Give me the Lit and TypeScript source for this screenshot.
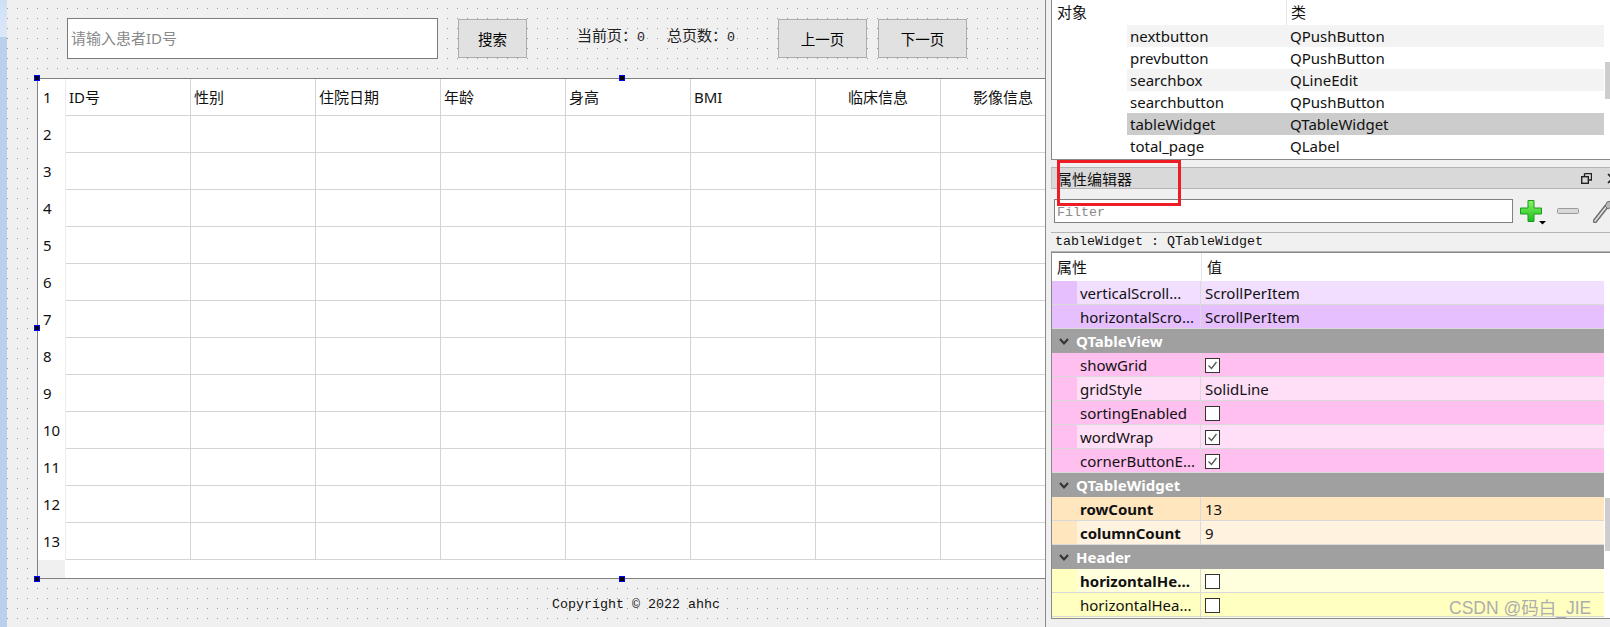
import { LitElement, html, css } from 'lit';
import { customElement } from 'lit/decorators.js';
import { classMap } from 'lit/directives/class-map.js';

interface PropRow {
  name: string;
  value?: string;
  check?: boolean;
  tone: string;
  light?: boolean;
  bold?: boolean;
  group?: boolean;
}

const HEADERS = ['ID号', '性别', '住院日期', '年龄', '身高', 'BMI', '临床信息', '影像信息', ''];
const ROW_COUNT = 13;

const OBJECTS = [
  ['nextbutton', 'QPushButton'],
  ['prevbutton', 'QPushButton'],
  ['searchbox', 'QLineEdit'],
  ['searchbutton', 'QPushButton'],
  ['tableWidget', 'QTableWidget'],
  ['total_page', 'QLabel'],
];

const PROPS: PropRow[] = [
  { name: 'verticalScroll...', value: 'ScrollPerItem', tone: 'purple', light: true },
  { name: 'horizontalScro...', value: 'ScrollPerItem', tone: 'purple' },
  { name: 'QTableView', tone: 'grey', group: true },
  { name: 'showGrid', check: true, tone: 'pink' },
  { name: 'gridStyle', value: 'SolidLine', tone: 'pink', light: true },
  { name: 'sortingEnabled', check: false, tone: 'pink' },
  { name: 'wordWrap', check: true, tone: 'pink', light: true },
  { name: 'cornerButtonE...', check: true, tone: 'pink' },
  { name: 'QTableWidget', tone: 'grey', group: true },
  { name: 'rowCount', value: '13', tone: 'orange', bold: true },
  { name: 'columnCount', value: '9', tone: 'orange', light: true, bold: true },
  { name: 'Header', tone: 'grey', group: true },
  { name: 'horizontalHe...', check: false, tone: 'yellow', light: true, bold: true },
  { name: 'horizontalHea...', check: false, tone: 'yellow' },
];

@customElement('app-root')
export class AppRoot extends LitElement {
  static styles = css`
    :host {
      display: block;
      width: 1610px;
      height: 627px;
      overflow: hidden;
      background: #f0f0f0;
      font-family: 'Noto Sans', 'Noto Sans CJK SC', sans-serif;
      font-size: 15px;
      color: #111;
    }
    .page {
      position: relative;
      display: flex;
      height: 627px;
    }

    /* left strip */
    .strip {
      width: 7px;
      flex: none;
      background: linear-gradient(#cfe0f4 0, #dbe8f8 37px, #b9d1ec 37px);
    }

    /* designer form */
    .form {
      width: 1038px;
      flex: none;
      box-sizing: content-box;
      border-right: 1px solid #8a8a8a;
      background-color: #f0f0f0;
      background-image: radial-gradient(circle at 0.5px 0.5px, #999 0.7px, transparent 0.7px);
      background-size: 10px 10px;
      background-position: 0 8px;
    }
    .toolbar {
      display: flex;
      align-items: flex-start;
      height: 78px;
      padding-left: 60px;
      box-sizing: border-box;
    }
    .search {
      width: 371px;
      height: 41px;
      margin-top: 18px;
      box-sizing: border-box;
      border: 1px solid #7a7a7a;
      background: #fff;
      color: #8a8a8a;
      font-size: 15px;
      line-height: 39px;
      padding-left: 3px;
    }
    .btn {
      height: 39px;
      margin-top: 19px;
      box-sizing: border-box;
      border: 1px solid #adadad;
      background: #e1e1e1;
      display: flex;
      align-items: center;
      justify-content: center;
      font-size: 14.5px;
      color: #000;
    }
    .btn.search-btn {
      width: 69px;
      margin-left: 20px;
    }
    .btn.page-btn {
      width: 89px;
      margin-left: 11px;
    }
    .page-info {
      margin-top: 25px;
      font-size: 15px;
      line-height: 20px;
      color: #222;
      white-space: nowrap;
    }
    .page-info .num {
      font-family: 'Liberation Mono', monospace;
      font-size: 13.33px;
    }
    .current {
      margin-left: 50px;
      width: 90px;
    }
    .total {
      width: 100px;
    }

    .table-wrap {
      position: relative;
      margin-left: 30px;
      height: 501px;
    }
    .table {
      height: 100%;
      box-sizing: border-box;
      border-left: 1px solid #7f7f87;
      border-top: 1px solid #808080;
      border-bottom: 1px solid #808080;
      background: #fff;
      overflow: hidden;
    }
    .grid {
      display: grid;
      grid-template-columns: 28px repeat(9, 125px);
      grid-auto-rows: 37px;
    }
    .row-head {
      border-right: 1px solid #ececec;
      padding-left: 5px;
      font-size: 15px;
      line-height: 37px;
      background: #fff;
    }
    .cell {
      box-sizing: border-box;
      border-right: 1px solid #d4d4d4;
      border-bottom: 1px solid #d4d4d4;
      padding-left: 3px;
      font-size: 15px;
      line-height: 36px;
      white-space: nowrap;
    }
    .cell.center {
      text-align: center;
      padding-left: 0;
    }
    .corner {
      width: 27px;
      height: 18px;
      background: #f0f0f0;
    }
    .handle {
      position: absolute;
      width: 4px;
      height: 4px;
      border: 1px solid #0000ff;
      background: #000;
    }
    .h-tl { left: -3px; top: -3px; }
    .h-tc { left: 582px; top: -3px; }
    .h-ml { left: -3px; top: 247px; }
    .h-bl { left: -3px; top: 498px; }
    .h-bc { left: 582px; top: 498px; }

    .footer {
      padding-left: 545px;
      margin-top: 17px;
      font-family: 'Liberation Mono', monospace;
      font-size: 13.33px;
      line-height: 18px;
      color: #111;
      white-space: nowrap;
    }

    /* right panels */
    .side {
      width: 559px;
      margin-left: 5px;
      flex: none;
      display: flex;
      flex-direction: column;
    }
    .inspector {
      position: relative;
      height: 160px;
      box-sizing: border-box;
      border-left: 1px solid #8a8a8a;
      border-bottom: 1px solid #8a8a8a;
      background: #fff;
    }
    .head-row {
      display: flex;
      height: 25px;
      line-height: 25px;
    }
    .head-a {
      width: 235px;
      padding-left: 5px;
      box-sizing: border-box;
      border-right: 1px solid #e4e4e4;
    }
    .head-b {
      padding-left: 4px;
    }
    .obj-row {
      display: flex;
      width: 474px;
      height: 22px;
      line-height: 22px;
      margin-left: 75px;
      padding-left: 3px;
      box-sizing: content-box;
    }
    .obj-row.alt { background: #f3f3f3; }
    .obj-row.sel { background: #cccccc; }
    .obj-name { width: 160px; flex: none; }
    .thumb {
      position: absolute;
      right: 0;
      width: 5px;
      background: #cdcdcd;
    }
    .inspector .thumb { top: 62px; height: 37px; }
    .props .thumb { top: 245px; height: 53px; }

    .dock-title {
      margin-top: 7px;
      height: 22px;
      box-sizing: border-box;
      display: flex;
      align-items: center;
      justify-content: space-between;
      padding: 0 0 0 5px;
      background: #d9d9d9;
      border-top: 1px solid #b4b4b4;
      border-bottom: 1px solid #b4b4b4;
      border-left: 1px solid #c4c4c4;
    }
    .dock-icons {
      display: flex;
      gap: 15px;
      margin-right: -8px;
    }
    .filter-row {
      display: flex;
      align-items: flex-start;
      height: 43px;
      padding: 10px 0 0 3px;
      box-sizing: border-box;
    }
    .filter {
      width: 459px;
      height: 24px;
      box-sizing: border-box;
      border: 1px solid #808080;
      background: #fff;
      color: #8a8a8a;
      font-family: 'Liberation Mono', monospace;
      font-size: 13.33px;
      line-height: 25px;
      padding-left: 2px;
      flex: none;
    }
    .tool-plus { margin: 1px 0 0 7px; flex: none; }
    .tool-minus { margin: 9px 0 0 9px; flex: none; }
    .tool-wrench { margin: 1px 0 0 14px; flex: none; }

    .class-label {
      height: 20px;
      box-sizing: border-box;
      border-top: 1px solid #b4b4b4;
      border-bottom: 1px solid #b4b4b4;
      padding-left: 4px;
      font-family: 'Liberation Mono', monospace;
      font-size: 13.33px;
      line-height: 18px;
      color: #111;
      white-space: nowrap;
    }
    .props {
      position: relative;
      height: 367px;
      box-sizing: border-box;
      border-left: 1px solid #8a8a8a;
      border-top: 1px solid #8a8a8a;
      border-bottom: 1px solid #8a8a8a;
      background: #fff;
      overflow: hidden;
    }
    .props-head {
      display: flex;
      height: 28px;
      line-height: 28px;
    }
    .props-head .a {
      width: 150px;
      box-sizing: border-box;
      padding-left: 5px;
      border-right: 1px solid #e4e4e4;
    }
    .props-head .b {
      padding-left: 5px;
    }
    .prop {
      display: flex;
      width: 552px;
      height: 24px;
      box-sizing: border-box;
      border-bottom: 1px solid #d9d9d9;
      line-height: 25px;
      white-space: nowrap;
    }
    .indent { width: 25px; flex: none; }
    .name {
      width: 124px;
      flex: none;
      box-sizing: border-box;
      padding-left: 3px;
      border-right: 1px solid #d9d9d9;
    }
    .value {
      flex: 1;
      padding: 1px 0 0 4px;
      box-sizing: border-box;
      display: flex;
      align-items: center;
    }
    .bold { font-weight: 700; }

    .purple, .purple .indent { background: #e6bfff; }
    .purple.light { background: #f2deff; }
    .pink, .pink .indent { background: #ffbfef; }
    .pink.light { background: #ffdef7; }
    .orange, .orange .indent { background: #ffe6bf; }
    .orange.light { background: #fff2de; }
    .yellow, .yellow .indent { background: #ffffbf; }
    .yellow.light { background: #ffffde; }

    .prop.group {
      background: #a0a0a0;
      color: #fff;
      font-weight: 700;
      align-items: center;
      border-bottom: none;
      line-height: 23px;
    }
    .chevron {
      width: 24px;
      flex: none;
      display: flex;
      justify-content: center;
    }
    .box {
      width: 15px;
      height: 15px;
      box-sizing: border-box;
      border: 1px solid #333;
      background: #fff;
      display: flex;
      align-items: center;
      justify-content: center;
    }

    .red-mark {
      position: absolute;
      left: 1057px;
      top: 160px;
      width: 124px;
      height: 46px;
      box-sizing: border-box;
      border: 3px solid #ee1c25;
    }
    .watermark {
      position: absolute;
      left: 1449px;
      top: 596px;
      font-family: 'Liberation Sans', 'Noto Sans CJK SC', sans-serif;
      font-size: 17.5px;
      line-height: 24px;
      color: #adadad;
      white-space: nowrap;
    }
  `;

  private renderCheck(on: boolean) {
    return html`<span class="box">
      ${on
        ? html`<svg width="11" height="11" viewBox="0 0 11 11">
            <path d="M1.5 5.5 L4.5 8.5 L9.5 2" fill="none" stroke="#555" stroke-width="1.3" />
          </svg>`
        : ''}
    </span>`;
  }

  private renderProp(p: PropRow) {
    if (p.group) {
      return html`<div class="prop group">
        <span class="chevron">
          <svg width="10" height="7" viewBox="0 0 10 7">
            <path d="M1 1 L5 5.5 L9 1" fill="none" stroke="#333" stroke-width="2" />
          </svg>
        </span>
        <span>${p.name}</span>
      </div>`;
    }
    const classes = { prop: true, [p.tone]: true, light: !!p.light };
    return html`<div class=${classMap(classes)}>
      <span class="indent"></span>
      <span class="name ${p.bold ? 'bold' : ''}">${p.name}</span>
      <span class="value">${p.check !== undefined ? this.renderCheck(p.check) : p.value}</span>
    </div>`;
  }

  private renderTable() {
    const rows = [];
    for (let r = 0; r < ROW_COUNT; r++) {
      rows.push(html`<div class="row-head">${r + 1}</div>`);
      for (let c = 0; c < HEADERS.length; c++) {
        const text = r === 0 ? HEADERS[c] : '';
        rows.push(html`<div class="cell ${c === 6 || c === 7 ? 'center' : ''}">${text}</div>`);
      }
    }
    return html`<div class="grid">${rows}</div><div class="corner"></div>`;
  }

  render() {
    return html`
      <div class="page">
        <div class="strip"></div>
        <div class="form">
          <div class="toolbar">
            <div class="search">请输入患者ID号</div>
            <div class="btn search-btn">搜索</div>
            <div class="page-info current">当前页：<span class="num">0</span></div>
            <div class="page-info total">总页数：<span class="num">0</span></div>
            <div class="btn page-btn">上一页</div>
            <div class="btn page-btn">下一页</div>
          </div>
          <div class="table-wrap">
            <div class="table">${this.renderTable()}</div>
            <span class="handle h-tl"></span>
            <span class="handle h-tc"></span>
            <span class="handle h-ml"></span>
            <span class="handle h-bl"></span>
            <span class="handle h-bc"></span>
          </div>
          <div class="footer">Copyright © 2022 ahhc</div>
        </div>

        <div class="side">
          <div class="inspector">
            <div class="head-row">
              <div class="head-a">对象</div>
              <div class="head-b">类</div>
            </div>
            ${OBJECTS.map(
              ([name, type], i) => html`<div
                class="obj-row ${name === 'tableWidget' ? 'sel' : i % 2 === 0 ? 'alt' : ''}"
              >
                <span class="obj-name">${name}</span><span>${type}</span>
              </div>`
            )}
            <div class="thumb"></div>
          </div>

          <div class="dock-title">
            <span>属性编辑器</span>
            <span class="dock-icons">
              <svg width="11" height="11" viewBox="0 0 11 11">
                <path d="M3.5 .5 H10.5 V7 H8 M3.5 3 V.5" fill="none" stroke="#222" stroke-width="1.4" />
                <rect x=".7" y="3.7" width="6.6" height="6.6" fill="none" stroke="#222" stroke-width="1.4" />
              </svg>
              <svg width="11" height="11" viewBox="0 0 11 11">
                <path d="M1 1 L10 10 M10 1 L1 10" stroke="#222" stroke-width="1.6" />
              </svg>
            </span>
          </div>

          <div class="filter-row">
            <div class="filter">Filter</div>
            <svg class="tool-plus" width="28" height="25" viewBox="0 0 28 25">
              <defs>
                <linearGradient id="plus" x1="0" y1="0" x2="0" y2="1">
                  <stop offset="0" stop-color="#8cf06a" />
                  <stop offset="1" stop-color="#16c21a" />
                </linearGradient>
              </defs>
              <path
                d="M8 .5 H14 V8 H21.5 V14 H14 V21.5 H8 V14 H.5 V8 H8 Z"
                fill="url(#plus)"
                stroke="#1a9a1a"
              />
              <path d="M19 21 H26 L22.5 24.5 Z" fill="#000" />
            </svg>
            <svg class="tool-minus" width="22" height="6" viewBox="0 0 22 6">
              <rect x=".5" y=".5" width="21" height="5" rx="1" fill="#d8d8d8" stroke="#9a9a9a" />
            </svg>
            <svg class="tool-wrench" width="18" height="23" viewBox="0 0 18 23">
              <path d="M2 21 L13 7" stroke="#6e6e6e" stroke-width="4.5" stroke-linecap="round" />
              <path d="M2 21 L13 7" stroke="#e0e0e0" stroke-width="1.6" stroke-linecap="round" />
              <path d="M12 6 L14 2 L18 1 V7 L15 9 Z" fill="#b8b8b8" stroke="#6e6e6e" />
            </svg>
          </div>

          <div class="class-label">tableWidget : QTableWidget</div>

          <div class="props">
            <div class="props-head">
              <div class="a">属性</div>
              <div class="b">值</div>
            </div>
            ${PROPS.map((p) => this.renderProp(p))}
            <div class="prop yellow light"><span class="indent"></span><span class="name"></span></div>
            <div class="thumb"></div>
          </div>
        </div>

        <div class="red-mark"></div>
        <div class="watermark">CSDN @码白_JIE</div>
      </div>
    `;
  }
}

declare global {
  interface HTMLElementTagNameMap {
    'app-root': AppRoot;
  }
}
